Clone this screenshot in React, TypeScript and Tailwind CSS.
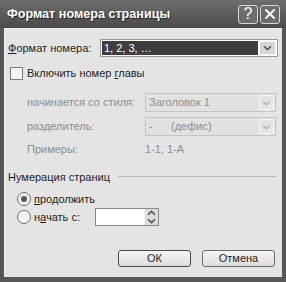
import React from "react";

function Chevron({ up = false, light = false }: { up?: boolean; light?: boolean }) {
  return (
    <svg width="9" height="6" viewBox="0 0 9 6" className={up ? "rotate-180" : ""}>
      <path d="M1 1.2 L4.5 4.6 L8 1.2" fill="none" stroke={light ? "#b8b8b8" : "#555"} strokeWidth="1.6" />
    </svg>
  );
}

function DisabledSelect({ children }: { children: React.ReactNode }) {
  return (
    <div className="flex-1 h-full flex items-center border border-[#c4c4c4] bg-[#e2e2e2] pl-[3px] pr-[1px]">
      <span className="flex-1 text-[#8c8c8c] whitespace-nowrap">{children}</span>
      <span className="w-[15px] h-[15px] flex items-center justify-center border border-[#f4f4f4] bg-[#e4e4e4]">
        <Chevron light />
      </span>
    </div>
  );
}

export default function App() {
  return (
    <div
      className="w-[286px] h-[282px] flex flex-col bg-[#575757] px-[4px] pb-[5px] text-[11px] text-[#1e1e1e] whitespace-nowrap"
      style={{ fontFamily: '"Liberation Sans", Arial, sans-serif' }}
    >
      {/* Title bar */}
      <div className="h-[28px] flex items-center -mx-[4px] px-[7px] bg-gradient-to-b from-[#6e6e6e] to-[#4a4a4a]">
        <span className="flex-1 text-white font-bold text-[12.6px] [text-shadow:1px_1px_1px_#222]">
          Формат номера страницы
        </span>
        <div className="flex gap-[2px] mr-[-1px]">
          <div className="w-[20px] h-[19px] rounded-[3px] border border-[#d8d8d8] bg-[#6c6c6c] flex items-center justify-center text-white text-[16px] leading-none">
            ?
          </div>
          <div className="w-[20px] h-[19px] rounded-[3px] border border-[#d8d8d8] bg-[#6c6c6c] flex items-center justify-center">
            <svg width="12" height="12" viewBox="0 0 12 12">
              <path d="M1.5 1.5 L10.5 10.5 M10.5 1.5 L1.5 10.5" stroke="#fff" strokeWidth="2" />
            </svg>
          </div>
        </div>
      </div>

      {/* Content */}
      <div className="flex-1 flex flex-col bg-[#e4e4e4] border-t border-l border-[#f2f2f2] pt-[10px] pl-[3px] pr-[4px]">
        <div className="h-[18px] flex items-center">
          <span className="w-[92px] shrink-0">
            <span className="underline">Ф</span>ормат номера:
          </span>
          <div className="flex-1 h-full flex items-center border border-[#9a9a9a] bg-white p-[1px]">
            <span className="flex-1 h-full bg-[#3e3e3e] text-white pl-[2px] leading-[14px]">1, 2, 3, …</span>
            <span className="w-[17px] h-full flex items-center justify-center bg-[#d6d6d6] border border-[#f6f6f6] ml-[1px]">
              <Chevron />
            </span>
          </div>
        </div>

        <div className="h-[13px] mt-[10px] flex items-center">
          <span className="ml-[2px] w-[13px] h-[13px] border border-[#7a7a7a] bg-[#f4f4f4]" />
          <span className="ml-[4px]">
            Включить номер <span className="underline">г</span>лавы
          </span>
        </div>

        <div className="h-[19px] mt-[13px] flex items-center pr-[2px]">
          <span className="w-[137px] shrink-0 pl-[19px] text-[#8c8c8c]">начинается со стиля:</span>
          <DisabledSelect>Заголовок 1</DisabledSelect>
        </div>

        <div className="h-[19px] mt-[5px] flex items-center pr-[2px]">
          <span className="w-[137px] shrink-0 pl-[19px] text-[#8c8c8c]">разделитель:</span>
          <DisabledSelect>
            <span className="inline-block w-[22px]">-</span>(дефис)
          </DisabledSelect>
        </div>

        <div className="h-[14px] mt-[6px] flex items-center text-[#8c8c8c]">
          <span className="w-[137px] shrink-0 pl-[19px]">Примеры:</span>
          <span>1-1, 1-А</span>
        </div>

        <div className="h-[14px] mt-[14px] flex items-center">
          <span>Нумерация страниц</span>
          <span className="flex-1 ml-[8px] mr-[2px] h-[2px] border-t border-[#b8b8b8] border-b-white" />
        </div>

        <div className="h-[14px] mt-[8px] flex items-center">
          <span className="ml-[9px] w-[14px] h-[14px] rounded-full border border-[#6e6e6e] bg-[#f2f2f2] flex items-center justify-center">
            <span className="w-[6px] h-[6px] rounded-full bg-[#555]" />
          </span>
          <span className="ml-[3px]">
            <span className="underline">п</span>родолжить
          </span>
        </div>

        <div className="h-[18px] mt-[2px] flex items-center">
          <span className="ml-[9px] w-[14px] h-[14px] rounded-full border border-[#6e6e6e] bg-[#f2f2f2]" />
          <span className="ml-[3px] w-[61px]">
            н<span className="underline">а</span>чать с:
          </span>
          <div className="w-[64px] h-full flex border border-[#8a8a8a] bg-white">
            <span className="flex-1" />
            <span className="w-[14px] flex flex-col items-center justify-center gap-[2px] bg-[#dcdcdc] border-l border-[#f6f6f6]">
              <Chevron up />
              <Chevron />
            </span>
          </div>
        </div>

        <div className="h-[17px] mt-[24px] flex justify-end gap-[11px] mr-[3px]">
          <button className="w-[73px] h-full rounded-[3px] border border-[#4a4a4a] bg-gradient-to-b from-[#f6f6f6] to-[#dcdcdc] text-[11px] leading-none">
            ОК
          </button>
          <button className="w-[73px] h-full rounded-[3px] border border-[#6a6a6a] bg-gradient-to-b from-[#f6f6f6] to-[#dcdcdc] text-[11px] leading-none">
            Отмена
          </button>
        </div>
      </div>
    </div>
  );
}
